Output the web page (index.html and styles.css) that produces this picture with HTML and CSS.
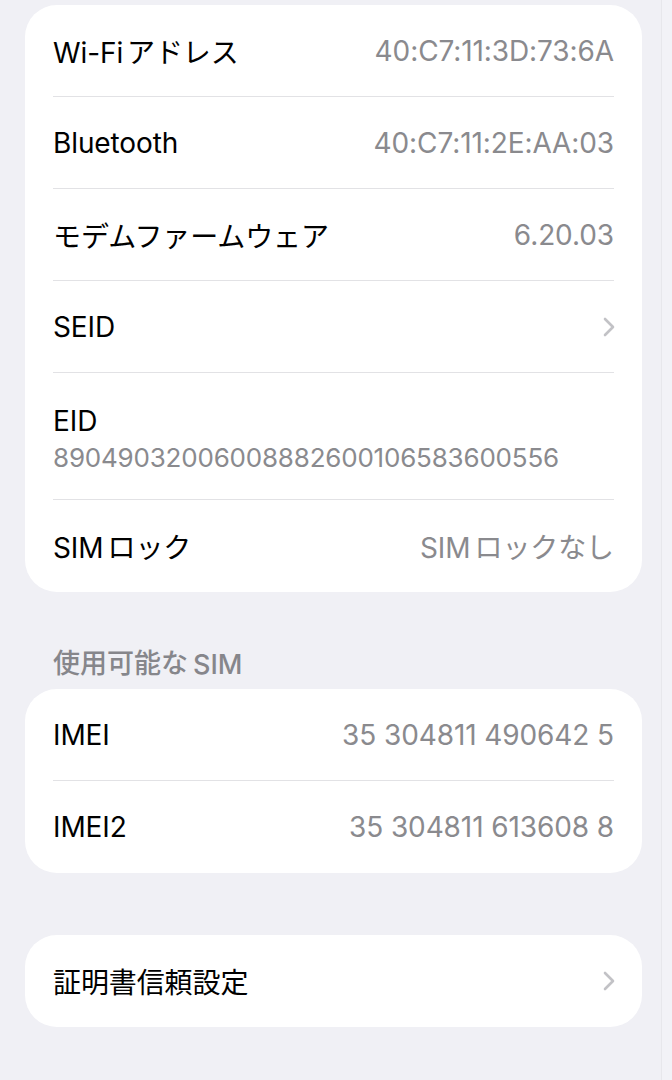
FILE: index.html
```html
<!DOCTYPE html>
<html lang="ja">
<head>
<meta charset="utf-8">
<title>情報</title>
<link rel="stylesheet" href="styles.css">
</head>
<body>
<div class="page">
  <section class="card">
    <div class="row"><span class="label"><span class="lat">Wi-Fi</span>アドレス</span><span class="value">40:C7:11:3D:73:6A</span></div>
    <div class="row"><span class="label">Bluetooth</span><span class="value">40:C7:11:2E:AA:03</span></div>
    <div class="row"><span class="label">モデムファームウェア</span><span class="value">6.20.03</span></div>
    <div class="row"><span class="label">SEID</span><svg class="chev" viewBox="0 0 12 20" width="12" height="20"><path d="M2 2 L10 10 L2 18" fill="none" stroke="currentColor" stroke-width="2.6" stroke-linecap="round" stroke-linejoin="round"/></svg></div>
    <div class="row row-stack"><span class="label">EID</span><span class="value eid">89049032006008882600106583600556</span></div>
    <div class="row"><span class="label"><span class="lat">SIM</span>ロック</span><span class="value"><span class="lat">SIM</span>ロックなし</span></div>
  </section>

  <h2 class="section-title">使用可能な<span class="lat-l">SIM</span></h2>
  <section class="card">
    <div class="row"><span class="label">IMEI</span><span class="value">35 304811 490642 5</span></div>
    <div class="row"><span class="label">IMEI2</span><span class="value">35 304811 613608 8</span></div>
  </section>

  <section class="card card-gap">
    <div class="row"><span class="label">証明書信頼設定</span><svg class="chev" viewBox="0 0 12 20" width="12" height="20"><path d="M2 2 L10 10 L2 18" fill="none" stroke="currentColor" stroke-width="2.6" stroke-linecap="round" stroke-linejoin="round"/></svg></div>
  </section>
</div>
</body>
</html>
```

FILE: styles.css
```css
html, body {
  margin: 0;
  padding: 0;
}
body {
  background: #f2f2f7;
  font-family: "Inter", "Noto Sans CJK JP", sans-serif;
  -webkit-font-smoothing: antialiased;
}
.page {
  width: 662px;
  box-sizing: border-box;
  padding: 5px 19px 0 25px;
  border-right: 1px solid #e7e7ec;
  min-height: 1080px;
  background: #f0f0f5;
}
.card {
  background: #ffffff;
  border-radius: 32px;
  padding: 0 28px;
}
.row {
  height: 92px;
  display: flex;
  align-items: center;
  justify-content: space-between;
  border-bottom: 1px solid #e2e2e5;
  box-sizing: border-box;
  font-size: 28px;
  letter-spacing: -0.1px;
}
.row:last-child {
  border-bottom: none;
}
.label {
  color: #000000;
}
.value {
  color: #8a8a8e;
}
.lat {
  margin-right: 4px;
}
.lat-l {
  margin-left: 5px;
}
.row-stack {
  height: 127px;
  flex-direction: column;
  align-items: flex-start;
  justify-content: center;
  gap: 4px;
  padding-top: 4px;
}
.eid {
  font-size: 26px;
  letter-spacing: -0.2px;
}
.chev {
  color: #c2c2c6;
  width: 12px;
  height: 20px;
  margin-right: -1px;
}
.section-title {
  margin: 0;
  height: 97px;
  box-sizing: border-box;
  display: flex;
  align-items: flex-end;
  padding: 0 28px 8px;
  font-size: 27px;
  font-weight: 500;
  color: #86868b;
  letter-spacing: 0;
}
.card-gap {
  margin-top: 62px;
}
```
